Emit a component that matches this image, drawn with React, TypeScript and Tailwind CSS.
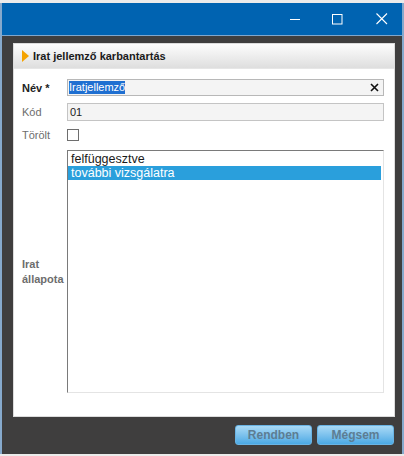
import React from "react";

export default function App() {
  return (
    <div className="w-[404px] h-[456px] bg-[#ebebeb] pt-[3px] pb-[2px] font-['Liberation_Sans',Arial,sans-serif]">
      <div className="h-full flex flex-col border-x-2 border-[#86a9cc]">
        {/* Title bar */}
        <div className="h-[32px] bg-[#0063b1] flex items-center justify-end text-white">
          <div className="w-[34px] h-full flex items-center justify-center">
            <svg width="11" height="11" viewBox="0 0 11 11">
              <path d="M0 5.5 H10" stroke="white" strokeWidth="1" />
            </svg>
          </div>
          <div className="w-[50px] h-full flex items-center justify-center">
            <svg width="11" height="11" viewBox="0 0 11 11">
              <rect x="0.5" y="0.5" width="9.5" height="9.5" fill="none" stroke="white" strokeWidth="1" />
            </svg>
          </div>
          <div className="w-[40px] h-full flex items-center justify-center">
            <svg width="12" height="12" viewBox="0 0 12 12">
              <path d="M0.5 0.5 L11 11 M11 0.5 L0.5 11" stroke="white" strokeWidth="1.1" />
            </svg>
          </div>
        </div>
        <div className="h-px bg-[#7fa6cc]" />

        {/* Dark frame */}
        <div className="flex-1 bg-[#3f3e3e] pl-[11px] pr-[7px] pt-[7px] flex flex-col">
          <div className="h-[374px] bg-white border border-[#dcdcdc] flex flex-col">
            <div className="h-[25px] bg-gradient-to-b from-[#fdfdfd] to-[#dedede] border-b border-[#e6e6e6] flex items-center pl-[8px] gap-[4px]">
              <svg width="7" height="12" viewBox="0 0 7 12">
                <path d="M0 0 L7 6 L0 12 Z" fill="#f5a300" />
              </svg>
              <span className="text-[11px] font-bold text-[#1a1a1a]">Irat jellemző karbantartás</span>
            </div>

            <div className="grid grid-cols-[45px_1fr] pl-[8px] pr-[10px] leading-[14px]">
              {/* Név */}
              <div className="mt-[10px] flex items-center text-[11px] font-bold text-[#222]">Név *</div>
              <div className="mt-[10px] h-[17px] bg-[#f4f4f4] border border-[#b8b8b8] flex items-center pl-px pr-[4px]">
                <span className="text-[11px] leading-[13px] bg-[#1f6fd1] text-white">Iratjellemző</span>
                <span className="ml-auto flex">
                  <svg width="9" height="9" viewBox="0 0 9 9">
                    <path d="M1 1 L8 8 M8 1 L1 8" stroke="#111" strokeWidth="1.6" />
                  </svg>
                </span>
              </div>

              {/* Kód */}
              <div className="mt-[7px] flex items-center text-[11px] text-[#6d6d6d]">Kód</div>
              <div className="mt-[7px] h-[18px] bg-[#f4f4f4] border border-[#c4c4c4] flex items-center pl-[2px]">
                <span className="text-[11px] text-[#222]">01</span>
              </div>

              {/* Törölt */}
              <div className="mt-[8px] h-[12px] flex items-center text-[11px] text-[#6d6d6d]">Törölt</div>
              <div className="mt-[8px] h-[12px] flex items-center">
                <div className="w-[12px] h-[12px] border border-[#6e6e6e] bg-white" />
              </div>

              {/* Irat állapota */}
              <div className="mt-[9px] flex items-center text-[11px] font-bold text-[#6d6d6d] leading-[15px]">
                Irat
                <br />
                állapota
              </div>
              <div className="mt-[9px] h-[243px] border-t border-l border-[#7a7a7a] border-r border-b border-r-[#e4e4e4] border-b-[#e4e4e4] pt-px pr-[2px]">
                <div className="h-[14px] flex items-center pl-[3px] text-[12.5px] text-[#1a1a1a]">felfüggesztve</div>
                <div className="h-[14px] flex items-center pl-[3px] text-[12.5px] text-white bg-[#2a9fdc]">további vizsgálatra</div>
              </div>
            </div>
          </div>

          {/* Buttons */}
          <div className="mt-[8px] flex justify-end gap-[5px] pr-px">
            <button className="w-[77px] h-[20px] rounded-[3px] bg-gradient-to-b from-[#a9daf6] to-[#4aa9e4] text-[12px] font-bold text-[#5d7d93] border border-[#6ab4e4]">
              Rendben
            </button>
            <button className="w-[77px] h-[20px] rounded-[3px] bg-gradient-to-b from-[#a9daf6] to-[#4aa9e4] text-[12px] font-bold text-[#5d7d93] border border-[#6ab4e4]">
              Mégsem
            </button>
          </div>
        </div>
      </div>
    </div>
  );
}
